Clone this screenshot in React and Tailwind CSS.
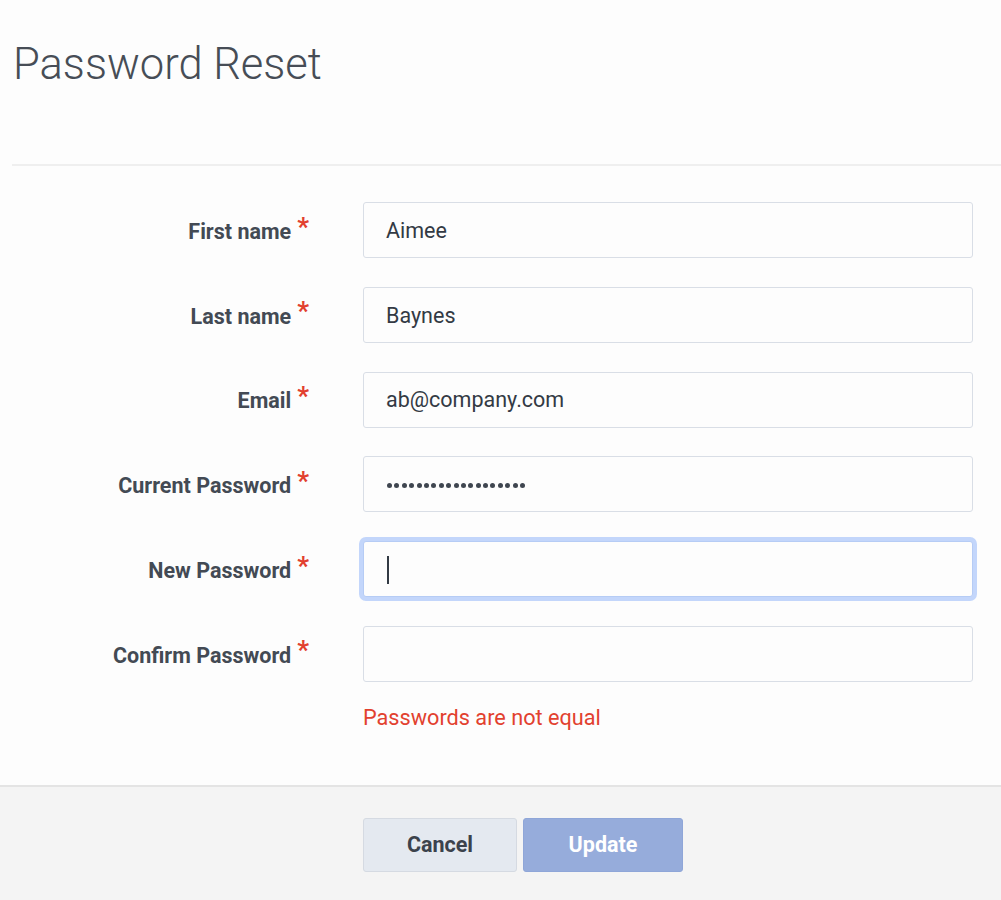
import React from "react";

const font = { fontFamily: "Roboto, 'Liberation Sans', sans-serif" };

function Label({ text }) {
  return (
    <div className="w-[309px] flex justify-end items-center shrink-0 pt-[3px]">
      <span className="text-[21.5px] font-bold text-[#434a54] leading-none">{text}</span>
      <span className="ml-[6px] text-[26px] font-bold text-[#e2402f] leading-none relative top-[-5px]">*</span>
    </div>
  );
}

function Field({ label, children, focused }) {
  return (
    <div className="flex items-center h-[56px]">
      <Label text={label} />
      <div
        className={
          "ml-[54px] w-[610px] h-[56px] rounded-[3px] border bg-[#fdfdfd] flex items-center pl-[22px] pt-[2px] text-[21.5px] text-[#333a44] " +
          (focused
            ? "border-[#b6ccf5] shadow-[0_0_0_4px_#c3d6fb]"
            : "border-[#d9dee6]")
        }
      >
        {children}
      </div>
    </div>
  );
}

export default function App() {
  const dots = Array.from({ length: 19 });
  return (
    <div className="w-[1001px] h-[900px] bg-[#fdfdfd] flex flex-col" style={font}>
      <div className="h-[164px] pl-[13px] pt-[40px]">
        <h1 className="text-[43.5px] font-light text-[#474d56] leading-[50px]">Password Reset</h1>
      </div>
      <div className="ml-[12px] h-[2px] bg-[#efefef]" />
      <div className="pt-[36px] flex flex-col gap-[28.8px]">
        <Field label="First name">Aimee</Field>
        <Field label="Last name">Baynes</Field>
        <Field label="Email">ab@company.com</Field>
        <Field label="Current Password">
          <div className="flex gap-[2.4px] ml-[1px]">
            {dots.map((_, i) => (
              <span key={i} className="w-[5px] h-[5px] rounded-full bg-[#3f4650]" />
            ))}
          </div>
        </Field>
        <Field label="New Password" focused>
          <span className="w-[2px] h-[28px] bg-[#333a44] ml-[1px]" />
        </Field>
        <Field label="Confirm Password" />
      </div>
      <div className="ml-[363px] mt-[24px] text-[21.7px] text-[#e2412f] leading-[24px]">
        Passwords are not equal
      </div>
      <div className="mt-[55px] flex-1 bg-[#f4f4f4] border-t-2 border-[#e4e4e4] flex items-start pl-[363px] pt-[31px] gap-[6px]">
        <button className="w-[154px] h-[54px] rounded-[3px] bg-[#e4e9f0] border border-[#d5dae2] text-[21.5px] font-bold text-[#3b424c]">
          Cancel
        </button>
        <button className="w-[160px] h-[54px] rounded-[3px] bg-[#96acdb] border border-[#8fa6d8] text-[21.5px] font-bold text-white">
          Update
        </button>
      </div>
    </div>
  );
}
